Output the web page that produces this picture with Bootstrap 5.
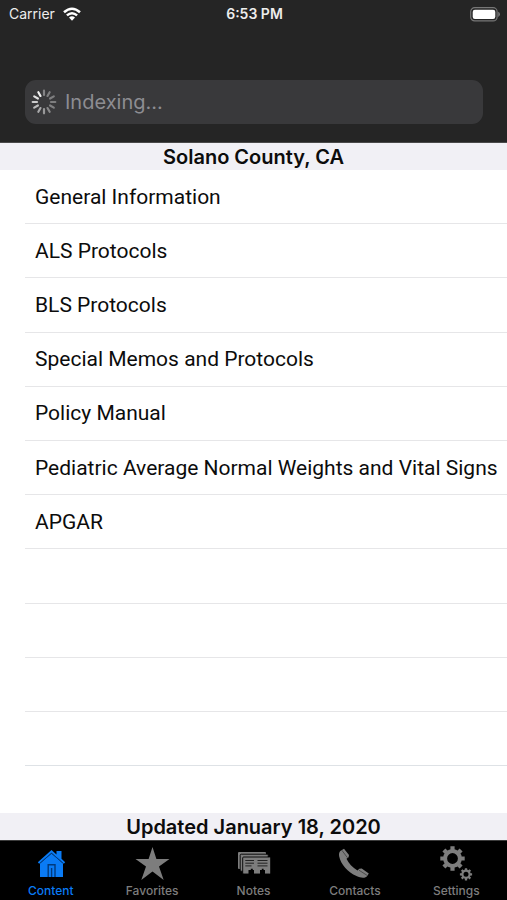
<!DOCTYPE html>
<html lang="en">
<head>
<meta charset="utf-8">
<meta name="viewport" content="width=device-width, initial-scale=1">
<title>Solano County, CA</title>
<link href="https://cdn.jsdelivr.net/npm/bootstrap@5.3.0/dist/css/bootstrap.min.css" rel="stylesheet">
<style>
  body { font-family: Inter, "Liberation Sans", sans-serif; color: #0c0c0c; background: #fff; }
  .app-top { background: #252525; border-bottom: 1px solid #4a4a4a; padding-bottom: 18px; }
  .status-bar { color: #ededed; font-size: 14px; line-height: 20px; padding: 4px 7px 0 9px; }
  .search-box { background: #39393b; border-radius: 11px; height: 44px; margin: 56px 24px 0 25px; padding-left: 6px; gap: 8px; }
  .search-box input { color: #8d8d92; font-size: 20px; line-height: 28px; outline: 0; }
  .search-box input::placeholder { color: #8d8d92; opacity: 1; }
  .band { background: #f1f0f5; color: #0c0c0c; font-size: 20px; line-height: 25px; padding-top: 2px; }
  .topics { padding: 0 0 47px 25px; }
  .topics .list-group-item { flex: 1 1 54px; color: #0c0c0c; background: none; border-color: #e6e6e8; border-width: 0 0 1px; padding: 0 0 0 10px; font-family: Roboto, Inter, sans-serif; font-size: 21px; line-height: 28px; white-space: nowrap; }
  .tab-bar { background: #000; border-top: 1px solid #3c3c3c; }
  .tab-bar .nav-link { color: #7d7d7d; padding: 5px 0 1px; font-size: 12px; line-height: 17px; }
  .tab-bar .nav-link.active { color: #0a7bf5; }
</style>
<script src="https://cdn.jsdelivr.net/npm/bootstrap@5.3.0/dist/js/bootstrap.bundle.min.js" defer></script>
</head>
<body class="d-flex flex-column min-vh-100">

<header class="app-top">
  <div class="status-bar row g-0 align-items-center">
    <div class="col d-flex align-items-center gap-2">
      <span>Carrier</span>
      <svg width="18" height="14" viewBox="0 0 18 14" fill="none" stroke="#fff" stroke-width="2.5" aria-hidden="true">
        <path d="M1 5.3Q9-1.8 17 5.3M3.9 8.4Q9 4 14.1 8.4"/>
        <path d="M6 10.6Q9 8 12 10.6L9 13.8Z" fill="#fff" stroke="none"/>
      </svg>
    </div>
    <div class="col-auto fw-semibold">6:53 PM</div>
    <div class="col d-flex justify-content-end">
      <svg width="30" height="15" viewBox="0 0 30 15" aria-hidden="true">
        <rect x=".7" y=".7" width="26.4" height="13.2" rx="4" fill="none" stroke="#777" stroke-width="1.2"/>
        <rect x="2.7" y="2.7" width="22.6" height="9.2" rx="2.2" fill="#fff"/>
        <path d="M28.2 4.7Q30 5.5 30 7.3T28.2 9.9Z" fill="#777"/>
      </svg>
    </div>
  </div>
  <div class="search-box d-flex align-items-center">
    <svg width="26" height="26" viewBox="-13 -13 26 26" stroke="#fff" stroke-width="2.2" stroke-linecap="round" aria-hidden="true">
      <path d="M0-7V-11.3" opacity=".38"/>
      <path d="M0-7V-11.3" opacity=".35" transform="rotate(30)"/>
      <path d="M0-7V-11.3" opacity=".35" transform="rotate(60)"/>
      <path d="M0-7V-11.3" opacity=".35" transform="rotate(90)"/>
      <path d="M0-7V-11.3" opacity=".36" transform="rotate(120)"/>
      <path d="M0-7V-11.3" opacity=".4" transform="rotate(150)"/>
      <path d="M0-7V-11.3" opacity=".48" transform="rotate(180)"/>
      <path d="M0-7V-11.3" opacity=".56" transform="rotate(210)"/>
      <path d="M0-7V-11.3" opacity=".65" transform="rotate(240)"/>
      <path d="M0-7V-11.3" opacity=".75" transform="rotate(270)"/>
      <path d="M0-7V-11.3" opacity=".85" transform="rotate(300)"/>
      <path d="M0-7V-11.3" opacity=".93" transform="rotate(330)"/>
    </svg>
    <input type="text" class="flex-grow-1 border-0 bg-transparent p-0" placeholder="Indexing..." aria-label="Search">
  </div>
</header>

<main class="flex-grow-1 d-flex flex-column">
  <h1 class="band m-0 fw-semibold text-center">Solano County, CA</h1>
  <div class="topics list-group list-group-flush flex-grow-1">
    <a href="#" class="list-group-item d-flex align-items-center">General Information</a>
    <a href="#" class="list-group-item d-flex align-items-center">ALS Protocols</a>
    <a href="#" class="list-group-item d-flex align-items-center">BLS Protocols</a>
    <a href="#" class="list-group-item d-flex align-items-center">Special Memos and Protocols</a>
    <a href="#" class="list-group-item d-flex align-items-center">Policy Manual</a>
    <a href="#" class="list-group-item d-flex align-items-center">Pediatric Average Normal Weights and Vital Signs</a>
    <a href="#" class="list-group-item d-flex align-items-center">APGAR</a>
    <div class="list-group-item"></div>
    <div class="list-group-item"></div>
    <div class="list-group-item"></div>
    <div class="list-group-item border-bottom"></div>
  </div>
  <p class="band m-0 fw-semibold text-center">Updated January 18, 2020</p>
</main>

<nav class="tab-bar nav flex-nowrap" aria-label="Sections">
  <a href="#" class="nav-link active col d-flex flex-column align-items-center fw-medium" aria-current="page">
    <svg width="36" height="36" viewBox="0 0 36 36" fill="currentColor" aria-hidden="true">
      <path d="M7 17.5 18.5 7.5 30 17.5V31H7Z"/>
      <path d="M18.5 4 23.5 8.4V5H28.5V12.8L32.2 16.2 30.8 17.7 18.5 7 6.2 17.7 4.8 16.2Z"/>
      <path d="M7 17 18.5 7.2 30 17" fill="none" stroke="#003d85" stroke-width=".9"/>
      <path d="M15.2 31V18.7H22V31M18.6 31V22" fill="none" stroke="#003a7d" stroke-width="1.4"/>
    </svg>
    Content
  </a>
  <a href="#" class="nav-link col d-flex flex-column align-items-center fw-medium">
    <svg width="36" height="36" viewBox="0 0 36 36" fill="currentColor" aria-hidden="true">
      <path d="M18.5 1 22.4 13H35.5L25 20.6 29.7 34 18.5 25.6 7.3 34 12 20.6 1.5 13H14.6Z"/>
    </svg>
    Favorites
  </a>
  <a href="#" class="nav-link col d-flex flex-column align-items-center fw-medium">
    <svg width="36" height="36" viewBox="0 0 36 36" fill="currentColor" aria-hidden="true">
      <rect x="2" y="6" width="28" height="17" rx="1"/>
      <rect x="4.2" y="8.2" width="28" height="17" rx="1" stroke="#000" stroke-width=".9"/>
      <rect x="6.7" y="11" width="28" height="17" rx="1" stroke="#000" stroke-width=".9"/>
      <path d="M9.3 14.5H18M9.3 17.2H18M9.3 19.9H15.5M21.5 14.5H31.5M21.5 17.2H31.5M21.5 19.9H31.5" stroke="#222" stroke-width="1"/>
      <path d="M12.5 28V24H14.8V22.7H16.8V24H18V28ZM24 28V24H25.8V22.7H27.6V24H29V28Z" fill="#000"/>
    </svg>
    Notes
  </a>
  <a href="#" class="nav-link col d-flex flex-column align-items-center fw-medium">
    <svg width="36" height="36" viewBox="0 0 36 36" fill="currentColor" aria-hidden="true">
      <path d="M3.3 5 7 2.7 12 9 11.6 11.3 9.5 12.8C11.5 17.2 15.5 21.8 20.5 24.4L22.3 22.7 24.7 22.6 31.8 27.4 29.8 30.6C27.5 32.5 23.5 32 19.5 30.1 11 26.5 3.6 18 2.2 10.5 1.7 8 2.2 6.2 3.3 5Z"/>
      <path d="M4.9 4.3 10.5 11.8M22 24.2 30 29.3" fill="none" stroke="#333" stroke-width=".7"/>
    </svg>
    Contacts
  </a>
  <a href="#" class="nav-link col d-flex flex-column align-items-center fw-medium">
    <svg width="36" height="36" viewBox="0 0 36 36" fill="none" stroke="currentColor" aria-hidden="true">
      <circle cx="14.5" cy="12.5" r="7.4" stroke-width="4"/>
      <path stroke-width="4.2" d="M14.5.3V4M14.5 21V24.7M2.3 12.5H6M23 12.5H26.7M5.9 3.9 8.5 6.5M20.5 18.5 23.1 21.1M5.9 21.1 8.5 18.5M20.5 6.5 23.1 3.9"/>
      <circle cx="28" cy="28.3" r="3.6" stroke-width="2.2"/>
      <path stroke-width="2.3" d="M28 22.2V24.5M28 32.1V34.4M21.9 28.3H24.2M31.8 28.3H34.1M23.7 24 25.3 25.6M30.7 31 32.3 32.6M23.7 32.6 25.3 31M30.7 25.6 32.3 24"/>
    </svg>
    Settings
  </a>
</nav>

</body>
</html>
